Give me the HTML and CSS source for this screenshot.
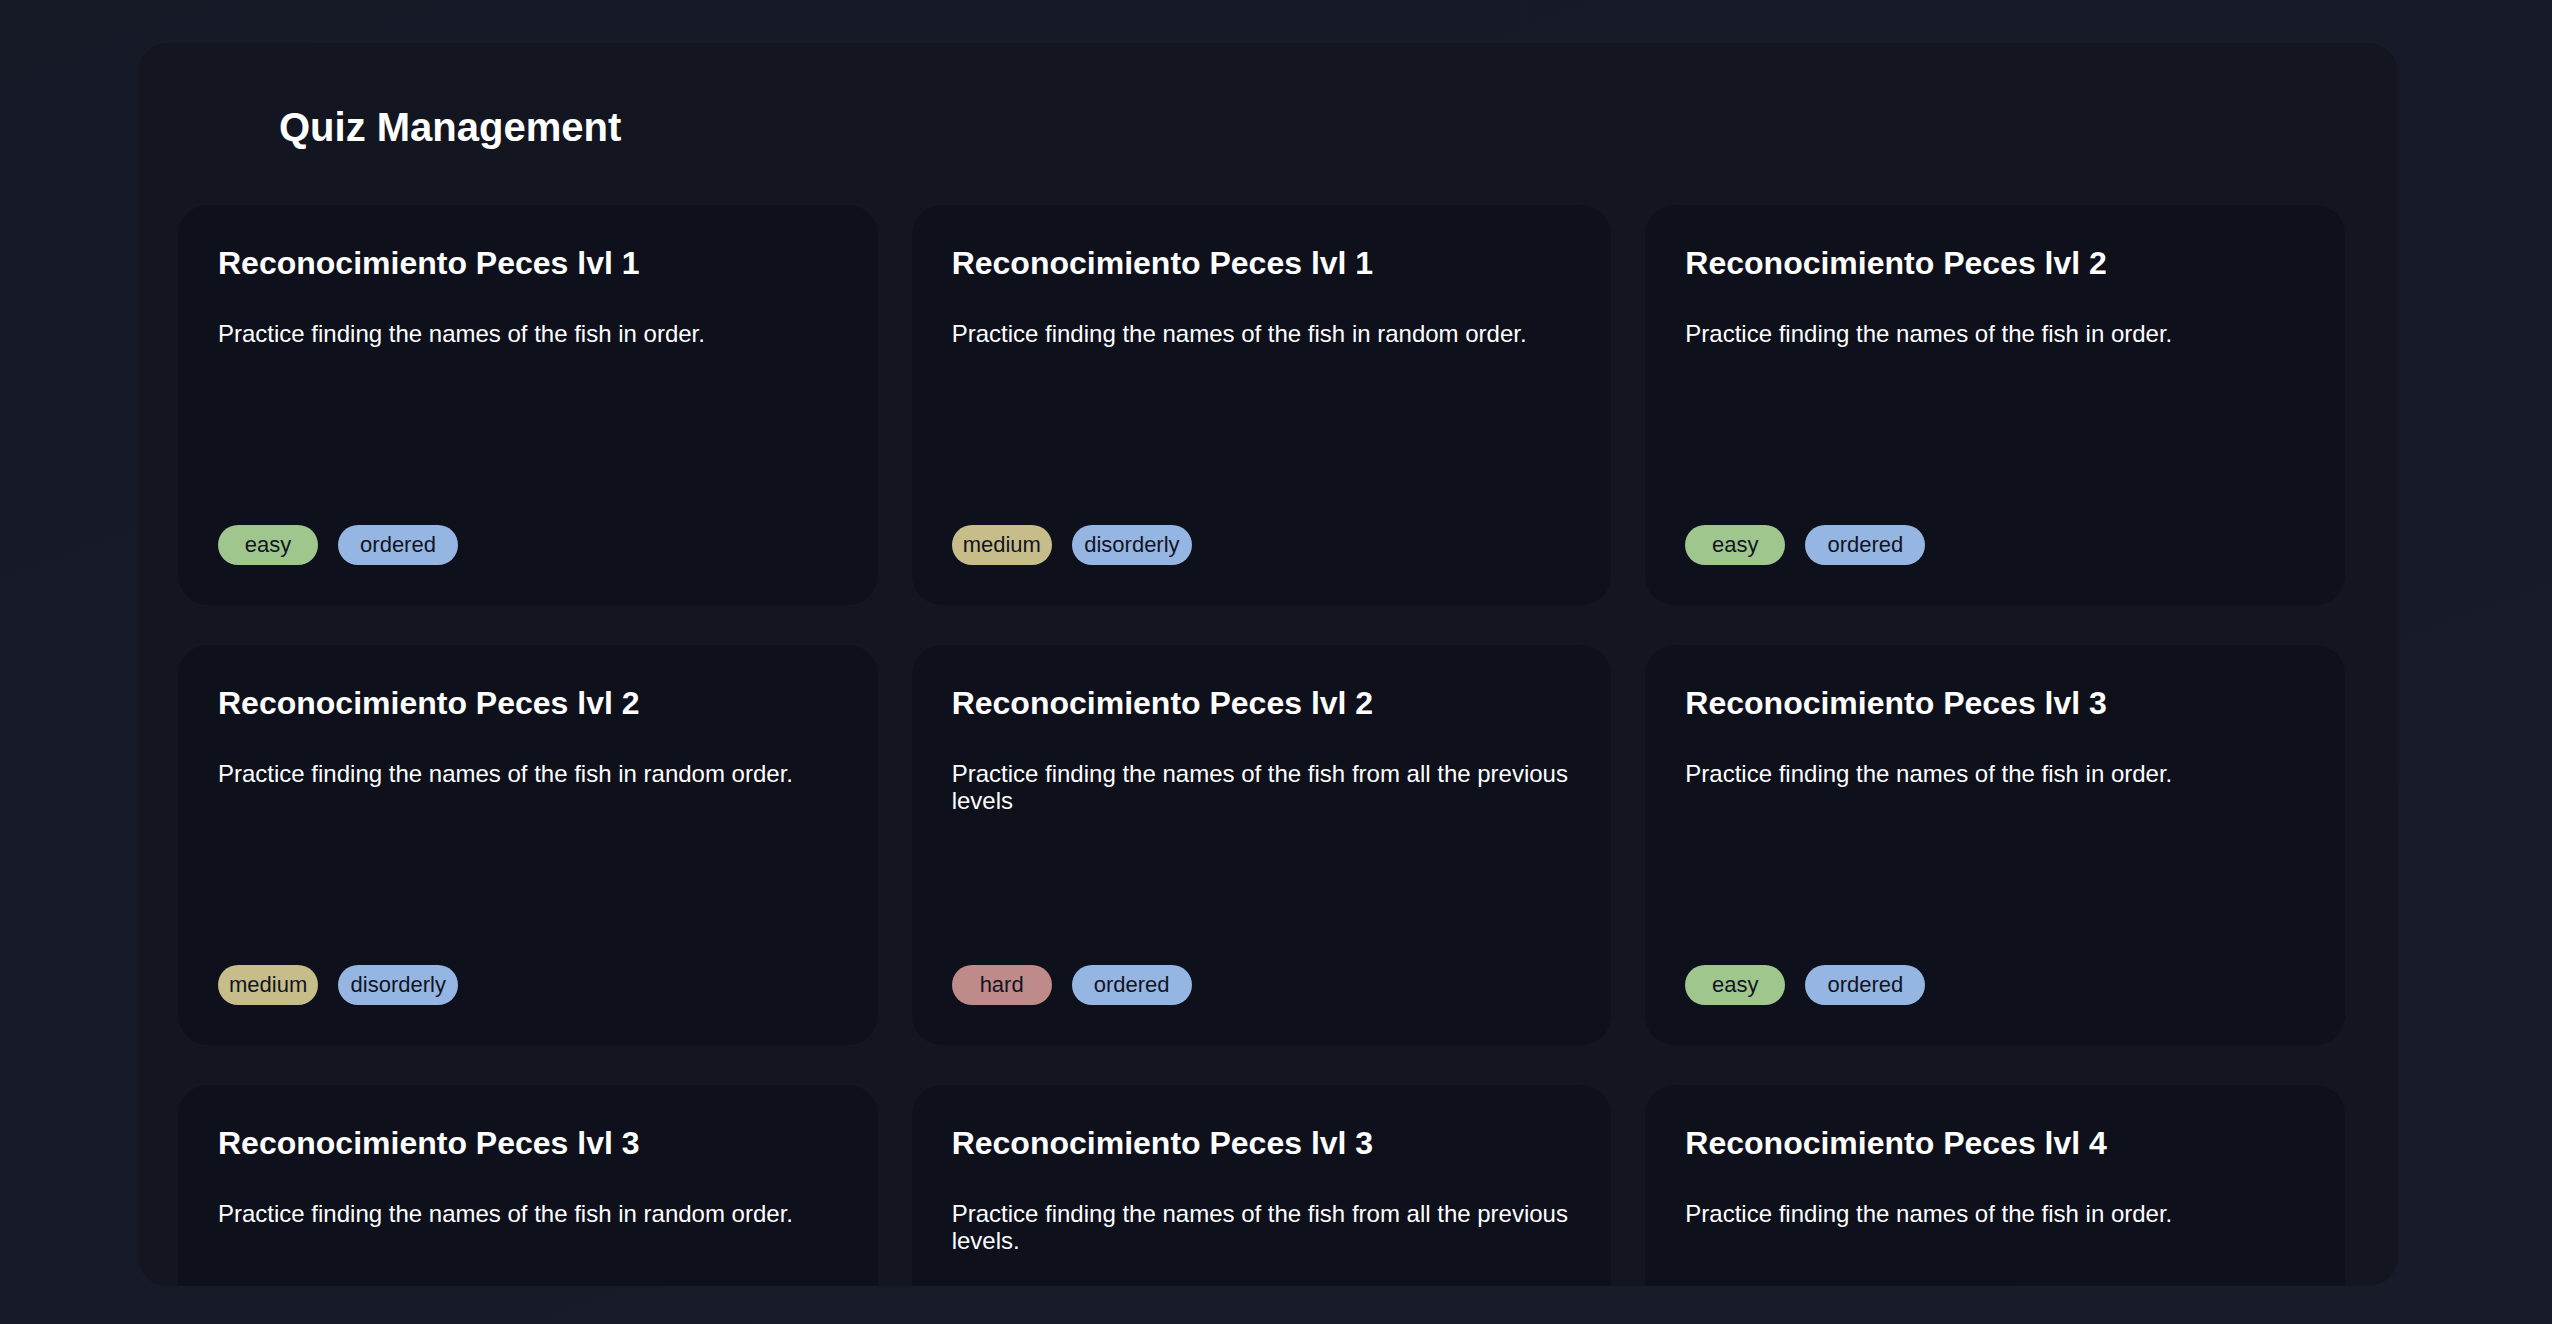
FILE: index.html
```html
<!DOCTYPE html>
<html lang="en">
<head>
<meta charset="utf-8">
<title>Quiz Management</title>
<link rel="stylesheet" href="styles.css">
</head>
<body>
<main class="panel">
  <h1 class="panel-title">Quiz Management</h1>
  <div class="quiz-grid">
    <article class="quiz-card">
      <h2 class="quiz-title">Reconocimiento Peces lvl 1</h2>
      <p class="quiz-desc">Practice finding the names of the fish in order.</p>
      <div class="tags"><span class="tag level easy">easy</span><span class="tag kind">ordered</span></div>
    </article>
    <article class="quiz-card">
      <h2 class="quiz-title">Reconocimiento Peces lvl 1</h2>
      <p class="quiz-desc">Practice finding the names of the fish in random order.</p>
      <div class="tags"><span class="tag level medium">medium</span><span class="tag kind">disorderly</span></div>
    </article>
    <article class="quiz-card">
      <h2 class="quiz-title">Reconocimiento Peces lvl 2</h2>
      <p class="quiz-desc">Practice finding the names of the fish in order.</p>
      <div class="tags"><span class="tag level easy">easy</span><span class="tag kind">ordered</span></div>
    </article>
    <article class="quiz-card">
      <h2 class="quiz-title">Reconocimiento Peces lvl 2</h2>
      <p class="quiz-desc">Practice finding the names of the fish in random order.</p>
      <div class="tags"><span class="tag level medium">medium</span><span class="tag kind">disorderly</span></div>
    </article>
    <article class="quiz-card">
      <h2 class="quiz-title">Reconocimiento Peces lvl 2</h2>
      <p class="quiz-desc">Practice finding the names of the fish from all the previous levels</p>
      <div class="tags"><span class="tag level hard">hard</span><span class="tag kind">ordered</span></div>
    </article>
    <article class="quiz-card">
      <h2 class="quiz-title">Reconocimiento Peces lvl 3</h2>
      <p class="quiz-desc">Practice finding the names of the fish in order.</p>
      <div class="tags"><span class="tag level easy">easy</span><span class="tag kind">ordered</span></div>
    </article>
    <article class="quiz-card">
      <h2 class="quiz-title">Reconocimiento Peces lvl 3</h2>
      <p class="quiz-desc">Practice finding the names of the fish in random order.</p>
      <div class="tags"><span class="tag level medium">medium</span><span class="tag kind">disorderly</span></div>
    </article>
    <article class="quiz-card">
      <h2 class="quiz-title">Reconocimiento Peces lvl 3</h2>
      <p class="quiz-desc">Practice finding the names of the fish from all the previous levels.</p>
      <div class="tags"><span class="tag level hard">hard</span><span class="tag kind">ordered</span></div>
    </article>
    <article class="quiz-card">
      <h2 class="quiz-title">Reconocimiento Peces lvl 4</h2>
      <p class="quiz-desc">Practice finding the names of the fish in order.</p>
      <div class="tags"><span class="tag level easy">easy</span><span class="tag kind">ordered</span></div>
    </article>
  </div>
</main>
</body>
</html>
```

FILE: styles.css
```css
* {
  box-sizing: border-box;
}

html, body {
  margin: 0;
  height: 100%;
}

body {
  background: linear-gradient(160deg, #161a27 0%, #171a28 60%, #181b29 100%);
  font-family: "Liberation Sans", Arial, Helvetica, sans-serif;
  color: #ffffff;
  padding: 43px 154px 38px 138px;
  overflow: hidden;
}

.panel {
  height: 1243px;
  background: #131621;
  border-radius: 30px;
  overflow: hidden;
  padding: 61px 53px 0 40px;
}

.panel-title {
  margin: 0 0 55px 101px;
  font-size: 40px;
  line-height: 46px;
  font-weight: 700;
  color: #ffffff;
}

.quiz-grid {
  display: grid;
  grid-template-columns: repeat(3, 1fr);
  grid-auto-rows: 400px;
  column-gap: 34px;
  row-gap: 40px;
}

.quiz-card {
  background: #0e101b;
  border-radius: 30px;
  padding: 40px 36px 40px 40px;
  display: flex;
  flex-direction: column;
}

.quiz-title {
  margin: 0;
  font-size: 32px;
  line-height: 37px;
  font-weight: 700;
  color: #ffffff;
}

.quiz-desc {
  margin: 38px 0 0;
  font-size: 24px;
  line-height: 27px;
  color: #ffffff;
}

.tags {
  margin-top: auto;
  display: flex;
  gap: 20px;
}

.tag {
  height: 40px;
  line-height: 40px;
  padding: 0 11px;
  border-radius: 20px;
  font-size: 22px;
  color: #12141f;
  text-align: center;
}

.tag.level {
  min-width: 100px;
}

.tag.kind {
  min-width: 120px;
  background: #95b6e3;
}

.tag.easy {
  background: #9ec68d;
}

.tag.medium {
  background: #c6bd8b;
}

.tag.hard {
  background: #bf8a8a;
}
```
